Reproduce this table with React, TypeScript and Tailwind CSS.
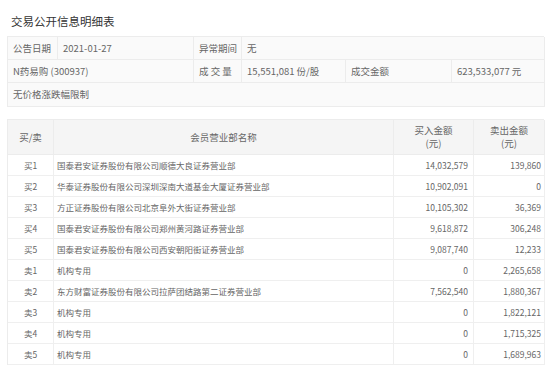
import React from 'react';

const font = { fontFamily: '"Noto Sans CJK SC", "Noto Sans", sans-serif' };

const rows: [string, string, string, string][] = [
  ['买1', '国泰君安证券股份有限公司顺德大良证券营业部', '14,032,579', '139,860'],
  ['买2', '华泰证券股份有限公司深圳深南大道基金大厦证券营业部', '10,902,091', '0'],
  ['买3', '方正证券股份有限公司北京阜外大街证券营业部', '10,105,302', '36,369'],
  ['买4', '国泰君安证券股份有限公司郑州黄河路证券营业部', '9,618,872', '306,248'],
  ['买5', '国泰君安证券股份有限公司西安朝阳街证券营业部', '9,087,740', '12,233'],
  ['卖1', '机构专用', '0', '2,265,658'],
  ['卖2', '东方财富证券股份有限公司拉萨团结路第二证券营业部', '7,562,540', '1,880,367'],
  ['卖3', '机构专用', '0', '1,822,121'],
  ['卖4', '机构专用', '0', '1,715,325'],
  ['卖5', '机构专用', '0', '1,689,963'],
];

const cell = 'flex items-center whitespace-nowrap border-r border-b border-[#ececec] px-[5px] bg-[#fafafa]';
const td = 'flex items-center whitespace-nowrap border-r border-b border-[#efefef]';

export default function App() {
  return (
    <div className="w-[558px] h-[375px] bg-white text-[#666] overflow-hidden" style={font}>
      <div className="pl-[11px] pt-[12px] h-[36px] text-[11.5px] text-[#333] leading-[18px]">交易公开信息明细表</div>

      {/* 基本信息 */}
      <div className="ml-[7px] w-[537px] grid grid-cols-[50px_136px_48px_104px_106px_93px] grid-rows-[23px_23px_24px] border-t border-l border-[#ececec] text-[9.5px]">
        <div className={cell}>公告日期</div>
        <div className={cell}>2021-01-27</div>
        <div className={cell}>异常期间</div>
        <div className={`${cell} col-span-3`}>无</div>
        <div className={`${cell} col-span-2`}>N药易购 (300937)</div>
        <div className={cell}>成 交 量</div>
        <div className={cell}>15,551,081 份/股</div>
        <div className={cell}>成交金额</div>
        <div className={cell}>623,533,077 元</div>
        <div className={`${cell} col-span-6`}>无价格涨跌幅限制</div>
      </div>

      {/* 明细 */}
      <div className="ml-[7px] mt-[12px] w-[537px] border-t border-l border-[#ececec] text-[8.5px]">
        <div className="grid grid-cols-[46px_340px_80px_71px] h-[35px] bg-[#f5f5f5] text-[9.5px]">
          <div className="flex items-center justify-center border-r border-b border-[#ececec]">买/卖</div>
          <div className="flex items-center justify-center border-r border-b border-[#ececec]">会员营业部名称</div>
          <div className="flex flex-col items-center justify-center border-r border-b border-[#ececec] leading-[13px]">
            <span>买入金额</span>
            <span>(元)</span>
          </div>
          <div className="flex flex-col items-center justify-center border-r border-b border-[#ececec] leading-[13px]">
            <span>卖出金额</span>
            <span>(元)</span>
          </div>
        </div>
        {rows.map(([side, name, buy, sell]) => (
          <div key={side} className="grid grid-cols-[46px_340px_80px_71px] h-[21px] bg-white">
            <div className={`${td} justify-center`}>{side}</div>
            <div className={`${td} pl-[3px]`}>{name}</div>
            <div className={`${td} justify-end pr-[5px]`}>{buy}</div>
            <div className={`${td} justify-end pr-[3px]`}>{sell}</div>
          </div>
        ))}
      </div>
    </div>
  );
}
